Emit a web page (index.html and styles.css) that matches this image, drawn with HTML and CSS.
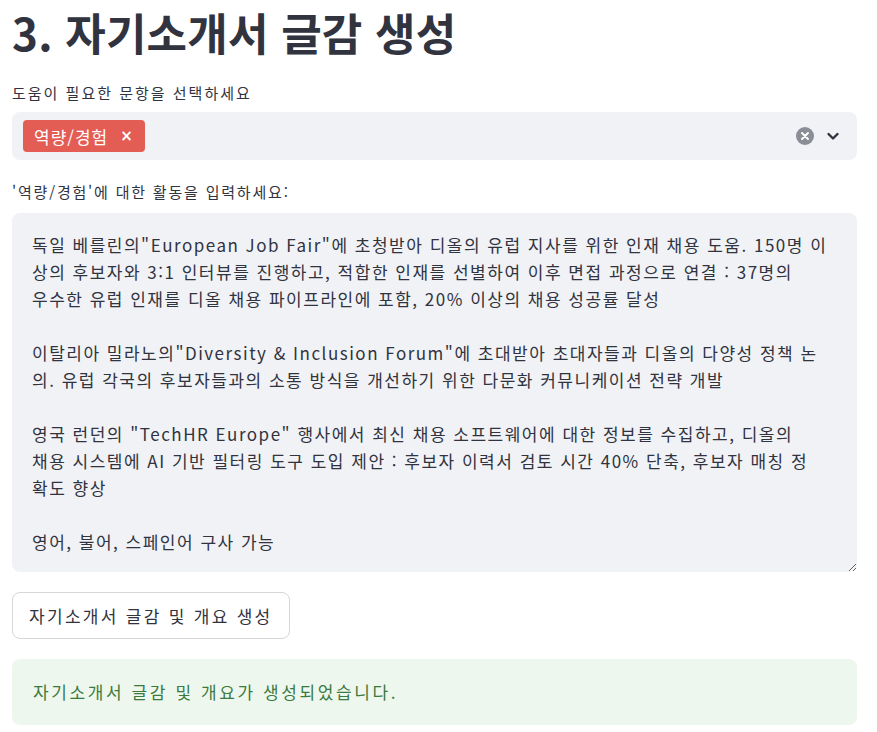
FILE: index.html
```html
<!DOCTYPE html>
<html lang="ko">
<head>
    <meta charset="UTF-8">
    <meta name="viewport" content="width=device-width, initial-scale=1.0">
    <title>자기소개서 글감 생성</title>
    <link rel="stylesheet" href="styles.css">
</head>
<body>
    <main class="page">
        <h1 class="title">3. 자기소개서 글감 생성</h1>

        <label class="field-label">도움이 필요한 문항을 선택하세요</label>
        <div class="multiselect">
            <div class="tags">
                <span class="tag">역량/경험 <span class="tag-x">×</span></span>
            </div>
            <div class="controls">
                <svg class="clear-icon" width="18" height="18" viewBox="0 0 18 18">
                    <circle cx="9" cy="9" r="9" fill="#8b8d97"/>
                    <path d="M6 6 L12 12 M12 6 L6 12" stroke="#fff" stroke-width="2" stroke-linecap="round"/>
                </svg>
                <svg class="chevron" width="14" height="14" viewBox="0 0 14 14">
                    <path d="M2.5 5 L7 9.5 L11.5 5" fill="none" stroke="#31333f" stroke-width="2.4" stroke-linecap="round" stroke-linejoin="round"/>
                </svg>
            </div>
        </div>

        <label class="field-label second">'역량/경험'에 대한 활동을 입력하세요:</label>
        <textarea class="activity" wrap="off">독일 베를린의"European Job Fair"에 초청받아 디올의 유럽 지사를 위한 인재 채용 도움. 150명 이
상의 후보자와 3:1 인터뷰를 진행하고, 적합한 인재를 선별하여 이후 면접 과정으로 연결 : 37명의
우수한 유럽 인재를 디올 채용 파이프라인에 포함, 20% 이상의 채용 성공률 달성

이탈리아 밀라노의"Diversity &amp; Inclusion Forum"에 초대받아 초대자들과 디올의 다양성 정책 논
의. 유럽 각국의 후보자들과의 소통 방식을 개선하기 위한 다문화 커뮤니케이션 전략 개발

영국 런던의 "TechHR Europe" 행사에서 최신 채용 소프트웨어에 대한 정보를 수집하고, 디올의
채용 시스템에 AI 기반 필터링 도구 도입 제안 : 후보자 이력서 검토 시간 40% 단축, 후보자 매칭 정
확도 향상

영어, 불어, 스페인어 구사 가능</textarea>

        <button class="generate" type="button">자기소개서 글감 및 개요 생성</button>

        <div class="success">자기소개서 글감 및 개요가 생성되었습니다.</div>
    </main>
</body>
</html>
```

FILE: styles.css
```css
body {
    margin: 0;
    background: #fff;
    color: #31333f;
    font-family: "Noto Sans CJK KR", "Noto Sans", sans-serif;
}
.page {
    width: 845px;
    padding: 0 12px;
    display: flex;
    flex-direction: column;
    align-items: flex-start;
}
.title {
    margin: 0;
    padding-top: 6px;
    font-size: 44px;
    font-weight: 700;
    line-height: 53px;
    letter-spacing: 0.2px;
}
.field-label {
    margin-top: 23px;
    font-size: 15px;
    line-height: 22px;
    letter-spacing: 2px;
}
.field-label.second {
    margin-top: 21px;
    letter-spacing: 1.8px;
}
.multiselect {
    margin-top: 8px;
    width: 100%;
    height: 48px;
    box-sizing: border-box;
    background: #f0f2f6;
    border-radius: 8px;
    display: flex;
    align-items: center;
    justify-content: space-between;
    padding: 0 17px 0 11px;
}
.tag {
    display: inline-flex;
    align-items: center;
    gap: 12px;
    height: 32px;
    padding: 0 11px 0 11px;
    background: #e35d55;
    color: #fff;
    border-radius: 4px;
    font-size: 17px;
    letter-spacing: 1px;
}
.tag-x {
    font-family: "DejaVu Sans", sans-serif;
    font-size: 15px;
    font-weight: 700;
}
.controls {
    display: flex;
    align-items: center;
    gap: 12px;
}
.activity {
    margin-top: 10px;
    width: 100%;
    height: 359px;
    box-sizing: border-box;
    padding: 18px 20px;
    border: none;
    border-radius: 8px;
    background: #f0f2f6;
    color: #31333f;
    font-family: "Noto Sans CJK KR", "Noto Sans", sans-serif;
    font-size: 17px;
    line-height: 27px;
    letter-spacing: 1.5px;
    overflow: hidden;
    resize: vertical;
    white-space: pre;
}
.generate {
    margin-top: 20px;
    height: 47px;
    padding: 0 16px;
    background: #fff;
    border: 1px solid #d5d6da;
    border-radius: 8px;
    color: #31333f;
    font-family: "Noto Sans CJK KR", "Noto Sans", sans-serif;
    font-size: 17px;
    letter-spacing: 2.3px;
    cursor: pointer;
}
.success {
    margin-top: 20px;
    width: 100%;
    box-sizing: border-box;
    padding: 18px 21px;
    background: #eef7ee;
    border-radius: 8px;
    color: #3b7a3e;
    font-size: 17px;
    line-height: 30px;
    letter-spacing: 2.6px;
}
```
